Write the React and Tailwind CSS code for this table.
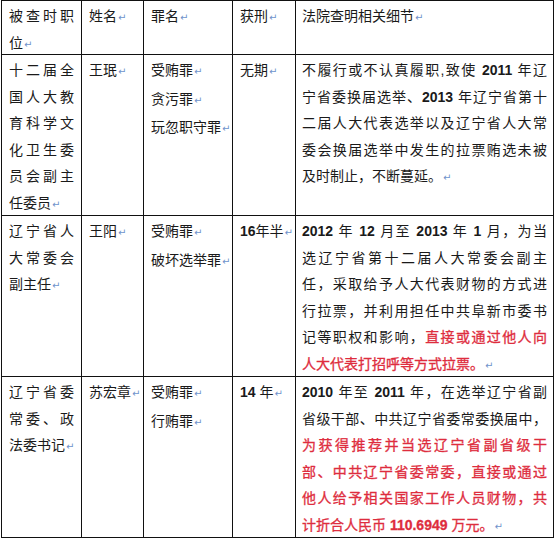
import clsx from "clsx";

// one line of a cell: parts are plain strings or { red: "..." }
const J = (...parts) => ({ parts, justify: true });
const E = (...parts) => ({ parts, mark: true });

const rows = [
    [
        [J("被查时职"), E("位")],
        [E("姓名")],
        [E("罪名")],
        [E("获刑")],
        [E("法院查明相关细节")],
    ],
    [
        [J("十二届全"), J("国人大教"), J("育科学文"), J("化卫生委"), J("员会副主"), E("任委员")],
        [E("王珉")],
        [E("受贿罪"), E("贪污罪"), E("玩忽职守罪")],
        [E("无期")],
        [
            J("不履行或不认真履职,致使 2011 年辽"),
            J("宁省委换届选举、2013 年辽宁省第十"),
            J("二届人大代表选举以及辽宁省人大常"),
            J("委会换届选举中发生的拉票贿选未被"),
            E("及时制止，不断蔓延。"),
        ],
    ],
    [
        [J("辽宁省人"), J("大常委会"), E("副主任")],
        [E("王阳")],
        [E("受贿罪"), E("破坏选举罪")],
        [E("16年半")],
        [
            J("2012 年 12 月至 2013 年 1 月，为当"),
            J("选辽宁省第十二届人大常委会副主"),
            J("任，采取给予人大代表财物的方式进"),
            J("行拉票，并利用担任中共阜新市委书"),
            J("记等职权和影响，", { red: "直接或通过他人向" }),
            E({ red: "人大代表打招呼等方式拉票。" }),
        ],
    ],
    [
        [J("辽宁省委"), J("常委、政"), E("法委书记")],
        [E("苏宏章")],
        [E("受贿罪"), E("行贿罪")],
        [E("14 年")],
        [
            J("2010 年至 2011 年，在选举辽宁省副"),
            J("省级干部、中共辽宁省委常委换届中，"),
            J({ red: "为获得推荐并当选辽宁省副省级干" }),
            J({ red: "部、中共辽宁省委常委，直接或通过" }),
            J({ red: "他人给予相关国家工作人员财物，共" }),
            E({ red: "计折合人民币 110.6949 万元。" }),
        ],
    ],
];

const Mark = () => (
    <span className="ml-px font-['DejaVu_Sans',sans-serif] text-[10px] font-normal text-[#6f93cc] [-webkit-text-stroke:0px]">↵</span>
);

// digits in the source look bold, so wrap number runs
const Digits = ({ text }) =>
    text.split(/(\d[\d.]*)/).map((t, i) =>
        /^\d/.test(t) ? (
            <span key={i} className="font-bold">{t}</span>
        ) : (
            t
        )
    );

function Line({ line }) {
    return (
        <div
            className={clsx(
                line.justify ? "text-justify [text-align-last:justify]" : "whitespace-nowrap"
            )}
        >
            {line.parts.map((p, i) =>
                typeof p === "string" ? (
                    <Digits key={i} text={p} />
                ) : (
                    <span key={i} className="text-[#de2d3e] [-webkit-text-stroke:0.3px_#de2d3e]">
                        <Digits text={p.red} />
                    </span>
                )
            )}
            {line.mark && <Mark />}
        </div>
    );
}

export default function App() {
    return (
        <div className="h-[538px] w-[556px] bg-white">
            <div className="ml-px grid w-fit grid-cols-[80px_62px_89px_63px_258px] grid-rows-[54px_161px_161px_161px] border-l border-t border-[#111] font-['Liberation_Sans','Noto_Sans_CJK_SC',sans-serif] text-[14px] leading-[26.6px] text-[#1a1a1a]">
                {rows.map((cells, r) =>
                    cells.map((lines, c) => (
                        <div
                            key={`${r}-${c}`}
                            className={clsx(
                                "overflow-hidden border-b border-r border-[#111] pt-[2px]",
                                c === 4 ? "pl-[6px] pr-[6px]" : "pl-[7px] pr-[7px]"
                            )}
                        >
                            {lines.map((line, i) => (
                                <Line key={i} line={line} />
                            ))}
                        </div>
                    ))
                )}
            </div>
        </div>
    );
}
